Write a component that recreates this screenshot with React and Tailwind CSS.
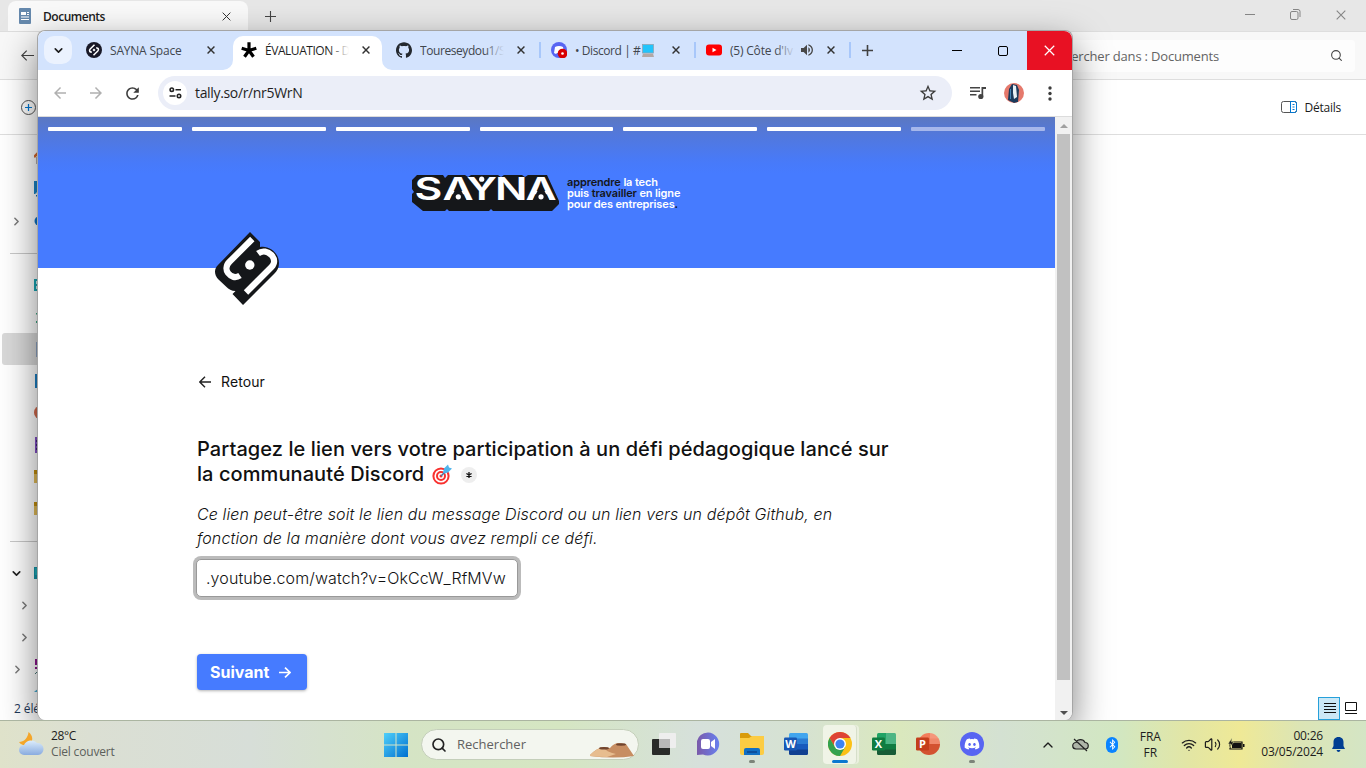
import React from "react";
import { SiGithub } from "react-icons/si";
import { FaDiscord, FaBluetoothB } from "react-icons/fa";
import { MdOutlineStarBorder, MdRefresh, MdVolumeUp, MdOutlineArrowBack, MdOutlineArrowForward } from "react-icons/md";
import { Wifi, Volume2, Search, ChevronRight, ChevronDown, ChevronUp } from "lucide-react";

const Cross = ({ size = 9, width = 1.6, className = "" }) => (
  <svg width={size} height={size} viewBox="0 0 10 10" className={className} fill="none" stroke="currentColor" strokeWidth={width}>
    <path d="M.7.7 9.3 9.3M9.3.7.7 9.3" />
  </svg>
);

const Plus = ({ size = 11, width = 1.6 }) => (
  <svg width={size} height={size} viewBox="0 0 11 11" fill="none" stroke="currentColor" strokeWidth={width}>
    <path d="M5.5 0v11M0 5.5h11" />
  </svg>
);

const SaynaMark = ({ className }) => (
  <svg viewBox="0 0 64 73" className={className}>
    <path fill="#15171a" d="M35 0 45 10v5c8-2 19 5 19 16 0 5-2 8-5 11L28 73 17.500 62l3-3c-4 0-7-2-9-4L3 47c-4-5-4-10 0-14Z" />
    <path d="M37.300 7 14.500 29.800c-4 4-3.500 8.500-1.500 11.200 3 4 7.500 5.500 12 2.500" fill="none" stroke="#fff" strokeWidth="6.200" />
    <path d="M43 21.500c4.500-3.500 10-2 13.500 1.500 3.500 4 3.500 8.500 0 12L31 60.500" fill="none" stroke="#fff" strokeWidth="6.200" />
    <circle cx="34.800" cy="33" r="4.700" fill="#fff" />
  </svg>
);

const SaynaLogo = () => (
  <svg width="149" height="37" viewBox="0 0 149 37" className="shrink-0">
    <path fill="#15171a" d="M5 1h26l2 3 3-3h17l3 2 3-2h27l3 2 3-2h18l3 2 3-2h19l12 26v3l-7 7H81l-2-2-2 2H37l-2-2-2 2H11L0 28V20l2-2-2-3V6Z" />
    <text transform="scale(1.38 1)" x="1.800 22.100 39.500 60.100 82.200" y="26" fontSize="31" fontWeight="600" fill="#fff" className="font-['Inter',sans-serif]">SAYNA</text>
    <path fill="#15171a" d="m46 10 8.500 17h-17zm83 0 8.500 17h-17z" />
    <g fill="#fff">
      <circle cx="46.300" cy="22.800" r="2.600" /><circle cx="69.700" cy="5.200" r="2.600" /><circle cx="129" cy="22.800" r="2.600" />
    </g>
  </svg>
);

const Asterisk = ({ size = 16 }) => (
  <svg width={size} height={size} viewBox="0 0 16 16" stroke="#000" strokeWidth="3.2" fill="none">
    <path d="M8 8.500V.3M8 8.500.7 6.200M8 8.500l7.300-2.300M8 8.500l-4.500 6.200M8 8.500l4.500 6.200" />
  </svg>
);

const YouTube = () => (
  <svg width="16" height="16" viewBox="0 0 16 16">
    <rect y="2.500" width="16" height="11" rx="3" fill="#f00" /><path d="m6.500 5.700 4 2.300-4 2.300z" fill="#fff" />
  </svg>
);

const DiscordTabIcon = () => (
  <svg width="16" height="16" viewBox="0 0 16 16">
    <circle cx="8" cy="8" r="8" fill="#5865f2" />
    <path d="M4 5c2.500-1.500 5.500-1.500 8 0l1 6-2 1-1-1H6l-1 1-2-1z" fill="#fff" />
    <circle cx="11.500" cy="11.500" r="4.800" fill="#d80000" /><circle cx="11.500" cy="11.500" r="1.300" fill="#fff" />
  </svg>
);

const SpaceIcon = () => (
  <svg width="16" height="16" viewBox="0 0 16 16">
    <circle cx="8" cy="8" r="8" fill="#191927" />
    <path d="M8.500 2.700 4.200 7c-1.500 1.500-.3 3.500 1.700 3M7.500 13.300 11.800 9c1.500-1.500.3-3.500-1.700-3" fill="none" stroke="#fff" strokeWidth="1.500" />
    <path d="m8 6.500 1.500 1.500L8 9.500 6.500 8z" fill="#fff" />
  </svg>
);

const Laptop = () => (
  <svg width="12" height="13" viewBox="0 0 12 13" className="ml-[2px] inline-block align-[-2px]">
    <rect x=".5" y=".5" width="11" height="8.500" fill="#22c4fb" stroke="#8fa5b5" strokeWidth=".8" />
    <path d="M1 9.500h10l1 3.500H0z" fill="#b3a8a5" />
  </svg>
);

function Tab({ icon, title, active, muted, separator, fade, tracking }) {
  return (
    <div className="flex h-[34px] w-[155px] shrink-0 items-start">
      <div className={active ? "relative flex h-[34px] w-[149px] items-center rounded-t-[10px] bg-white pb-[6px] pl-2" : "flex h-[28px] w-[149px] items-center pl-2"}>
        {active && (
          <>
            <svg className="absolute bottom-0 left-[-10px]" width="10" height="10"><path d="M10 0v10H0A10 10 0 0 0 10 0" fill="#fff" /></svg>
            <svg className="absolute right-[-10px] bottom-0" width="10" height="10"><path d="M0 0v10h10A10 10 0 0 1 0 0" fill="#fff" /></svg>
          </>
        )}
        <div className="flex w-4 shrink-0 justify-center">{icon}</div>
        <div className={"relative mt-px ml-2 overflow-hidden text-[12px] whitespace-nowrap " + tracking + (muted ? " w-[65px] " : " w-[84px] ") + (active ? "text-[#1f1f1f]" : "text-[#41464d]")}>
          {title}
          {fade && <div className={"absolute top-0 right-0 h-full w-5 bg-linear-to-r from-transparent " + (active ? "to-white" : "to-[#d3e3fd]")} />}
        </div>
        {muted && <MdVolumeUp className="ml-[4px] shrink-0 text-[#474747]" size={16} />}
        <Cross size={8} className={"shrink-0 text-[#333] " + (muted ? "ml-[12px]" : "ml-[13px]")} width={1.8} />
      </div>
      <div className={"mt-[6px] ml-[2px] h-4 w-[2px] " + (separator ? "bg-[#a8c7fa]" : "")} />
    </div>
  );
}

function TabStrip() {
  return (
    <div className="flex h-[39px] shrink-0 items-start overflow-hidden rounded-t-lg bg-[#d3e3fd]">
      <div className="mt-[5px] ml-[6px] flex h-7 w-7 shrink-0 items-center justify-center rounded-[10px] bg-[#ebf2fe]">
        <ChevronDown size={13} strokeWidth={3} className="text-[#1f1f1f]" />
      </div>
      <div className="mt-[5px] ml-[6px] flex">
        <Tab icon={<SpaceIcon />} title="SAYNA Space" tracking="tracking-[-0.2px]" />
        <Tab icon={<Asterisk />} title="ÉVALUATION - D" tracking="tracking-[-0.45px]" active fade />
        <Tab icon={<SiGithub size={16} color="#24292f" />} title="Toureseydou1/S" tracking="tracking-[-0.42px]" separator fade />
        <Tab icon={<DiscordTabIcon />} title={<>• Discord | #<Laptop /></>} tracking="tracking-[-0.42px]" separator />
        <Tab icon={<YouTube />} title="(5) Côte d'Iv" tracking="tracking-[-0.2px]" separator muted fade />
      </div>
      <div className="mt-[14px] ml-[9px] text-[#414141]"><Plus size={11} /></div>
      <div className="ml-auto flex h-full items-center">
        <div className="mr-[36px] h-px w-[10px] bg-black" />
        <div className="mr-[19px] h-[10px] w-[10px] rounded-[2px] border border-black" />
        <div className="flex h-full w-[45px] items-center justify-center bg-[#e81123] pr-px text-white"><Cross size={11} width={1.1} /></div>
      </div>
    </div>
  );
}

function Toolbar() {
  return (
    <div className="flex h-[47px] shrink-0 items-center border-b border-[#dcdcdc] bg-white pl-[13px]">
      <MdOutlineArrowBack size={18} className="text-[#b0b0b0]" />
      <MdOutlineArrowForward size={18} className="ml-[18px] text-[#b0b0b0]" />
      <MdRefresh size={19} className="ml-[18px] text-[#3c3c3c]" />
      <div className="ml-[16px] flex h-[34px] w-[794px] items-center rounded-full bg-[#ebeef8] pl-[5px]">
        <div className="flex h-6 w-6 items-center justify-center rounded-full bg-white">
          <svg width="13" height="12" viewBox="0 0 13 12" fill="none" stroke="#222" strokeWidth="1.600">
            <circle cx="2.800" cy="2.700" r="1.700" /><path d="M6.500 2.700H12M.5 9h6" /><circle cx="10" cy="9" r="1.700" />
          </svg>
        </div>
        <div className="-mt-px ml-2 text-[14px] tracking-[-0.34px] text-[#1f1f1f]">tally.so/r/nr5WrN</div>
        <MdOutlineStarBorder size={20} className="mr-[14px] ml-auto text-[#3c3c3c]" />
      </div>
      <svg width="16" height="14" viewBox="0 0 16 14" className="ml-[18px]" fill="#444">
        <path d="M0 1h10v1.600H0zM0 4.500h10v1.600H0zM0 8h6.500v1.600H0zM11.500 1H16v2h-2.800v7.500h-1.700z" /><circle cx="10.800" cy="10.500" r="2.600" />
      </svg>
      <svg width="20" height="20" viewBox="0 0 20 20" className="ml-[18px]">
        <clipPath id="av"><circle cx="10" cy="10" r="10" /></clipPath>
        <g clipPath="url(#av)">
          <path fill="#e5796c" d="M0 0h20v20H0z" /><path fill="#1b3a5c" d="m8 1 5 1 2 5-1 12-4 1-6-3 1-11z" /><path fill="#e9f0f5" d="m9 2 3 1 1 11-3 2-1-6z" /><path fill="#4385b7" d="M6 6h1v10H6z" />
        </g>
      </svg>
      <svg width="4" height="15" viewBox="0 0 4 15" className="ml-[24px]" fill="#3c3c3c"><circle cx="2" cy="2" r="1.700" /><circle cx="2" cy="7.500" r="1.700" /><circle cx="2" cy="13" r="1.700" /></svg>
    </div>
  );
}

const Target = () => (
  <svg width="20" height="21" viewBox="0 0 20 20" className="mb-px ml-2">
    <circle cx="9" cy="11.500" r="7.600" fill="#fff" stroke="#f8312f" strokeWidth="2" /><circle cx="9" cy="11.500" r="4" fill="#fff" stroke="#f8312f" strokeWidth="2" /><circle cx="9" cy="11.500" r="1.500" fill="#f8312f" />
    <path d="m9 11.500 6-6" stroke="#3a7aa5" strokeWidth="1.200" /><path d="m11 8 1-4 4-4 1 3 3 1-4 4-4 1z" fill="#50b5ec" />
  </svg>
);

function FormPage() {
  return (
    <div className="relative flex-1 bg-white font-['Inter',sans-serif] text-[#111]">
      <div className="flex h-[151px] flex-col bg-[linear-gradient(180deg,#5b78c1_0px,#5278dc_18px,#477afa_46px,#467bff_56px)]">
        <div className="flex gap-[10px] px-[10px] pt-[10px]">
          {[0, 1, 2, 3, 4, 5, 6].map((i) => (
            <div key={i} className={"h-1 flex-1 rounded-[1px] " + (i === 6 ? "bg-[#a6b7eb]" : "bg-white")} />
          ))}
        </div>
        <div className="mt-[43px] ml-[374px] flex">
          <SaynaLogo />
          <div className="mt-[3px] ml-[6px] text-[11px] leading-[11px] font-semibold tracking-[-0.13px] whitespace-nowrap text-white">
            <div><span className="text-[#15171a]">apprendre</span> la tech</div>
            <div>puis <span className="text-[#15171a]">travailler</span> en ligne</div>
            <div>pour des entreprises<span className="text-[#15171a]">.</span></div>
          </div>
        </div>
      </div>
      <SaynaMark className="absolute top-[115px] left-[177px] h-[73px] w-[64px]" />
      <div className="flex flex-col items-start pl-[159px]">
        <div className="mt-[103px] flex h-5 items-center text-[14px]">
          <svg width="12" height="12" viewBox="0 0 12 12" fill="none" stroke="#222" strokeWidth="1.400" className="mt-px ml-[2px]"><path d="M12 6H1M6 .8.800 6 6 11.200" /></svg>
          <span className="ml-[10px] tracking-[0.1px]">Retour</span>
        </div>
        <h1 className="mt-[46px] text-[20px] leading-[25px] font-medium tracking-[0.08px] whitespace-nowrap">
          <span className="block">Partagez le lien vers votre participation à un défi pédagogique lancé sur</span>
          <span className="flex h-[25px] items-center">
            la communauté Discord
            <Target />
            <span className="mt-px ml-[9px] flex h-4 w-4 items-center justify-center rounded-full bg-[#eee]">
              <svg width="6" height="6" viewBox="0 0 6 6" stroke="#111" strokeWidth="1.300"><path d="M3 0v6M.4 1.500l5.200 3M5.600 1.500l-5.200 3" /></svg>
            </span>
          </span>
        </h1>
        <p className="mt-[15px] text-[16px] leading-6 font-light tracking-[0.12px] whitespace-nowrap italic">
          Ce lien peut-être soit le lien du message Discord ou un lien vers un dépôt Github, en<br />fonction de la manière dont vous avez rempli ce défi.
        </p>
        <div className="mt-[9px] -ml-px flex h-[38px] w-[322px] items-center overflow-hidden rounded-[5px] border border-[#999] bg-white pl-[9px] text-[16px] font-light tracking-[0.1px] whitespace-nowrap ring-[3px] ring-[#bbb]">.youtube.com/watch?v=OkCcW_RfMVw</div>
        <div className="mt-[57px] flex h-9 w-[110px] items-center rounded-[4px] bg-[#467bff] pl-[13px] text-[16px] font-bold text-white shadow-[0_1px_3px_rgba(0,0,0,.3)]">
          <span>Suivant</span>
          <svg width="12" height="11" viewBox="0 0 12 11" fill="none" stroke="#fff" strokeWidth="1.700" className="ml-[10px]"><path d="M0 5.500h11M6 .7l5 4.800-5 4.800" /></svg>
        </div>
      </div>
    </div>
  );
}

function ChromeWindow() {
  return (
    <div className="absolute top-[30px] left-[37px] flex h-[690px] w-[1036px] flex-col rounded-lg border border-b-0 border-[#a5a5a5] bg-white shadow-[0_14px_36px_rgba(0,0,0,0.5)]">
      <TabStrip />
      <Toolbar />
      <div className="flex min-h-0 flex-1 overflow-hidden rounded-b-lg">
        <FormPage />
        <div className="flex w-[17px] flex-col items-center bg-[#f1f1f1]">
          <svg width="8" height="4" className="mt-[7px]"><path d="m4 0 4 4H0z" fill="#a0a0a0" /></svg>
          <div className="mt-[6px] h-[546px] w-[13px] bg-[#c1c1c1]" />
          <svg width="8" height="4" className="mt-[31px]"><path d="m4 4 4-4H0z" fill="#505050" /></svg>
        </div>
      </div>
    </div>
  );
}

const glyphs = {
  home: <><path d="m0 8 7-7 7 7" stroke="#d8692c" strokeWidth="2.500" fill="none" /><path d="M2 8h11v7H2z" fill="#b5b0ae" /></>,
  gallery: <><rect width="16" height="13" fill="#1985c9" /><path d="m1 13 9-9 6 9z" fill="#d4ecfa" /><path d="M2 14h12v1.500H2z" fill="#1673b5" /></>,
  cloud: <circle cx="5" cy="8" r="4.500" fill="#0c74c8" />,
  desktop: <><rect y="2" width="16" height="12" fill="#18a6b5" /><path d="M2 4h3v3H2zm0 5h3v3H2z" fill="#d6f5fa" /></>,
  download: <path d="M2 4h4v1.500H2zm0 8h12v2H2z" fill="#3aa882" />,
  doc: <rect x="2" y="1" width="13" height="15" fill="#8da4c4" />,
  image: <rect x="1" y="1" width="14" height="14" fill="#1b7fc4" />,
  music: <circle cx="7" cy="7.500" r="7" fill="#d2694c" />,
  video: <><rect x="1" width="14" height="16" fill="#8450c8" /><path d="M2 3h2v2H2zm0 4h2v2H2zm0 4h2v2H2z" fill="#44237b" /></>,
  folder: <><path d="M0 2h16v12H0z" fill="#e3bd59" /><path d="M0 1h7v4H0z" fill="#c48f0e" /></>,
  pc: <><rect y="2" width="16" height="12" fill="#1596aa" /><path d="M1 3h14v7H1z" fill="#20b0bd" /></>,
};

function SideRow({ icon, open, chevron, indent, selected, line }) {
  if (line) return <div className="flex h-8 items-center pl-[10px]"><div className="h-px w-12 bg-[#c9c9c9]" /></div>;
  return (
    <div className={"flex h-8 w-[120px] items-center rounded-[3px] " + (selected ? "ml-[2px] bg-[#d9d9d9] " : "") + (indent ? "pl-[19px]" : selected ? "pl-[9px]" : "pl-[11px]")}>
      <div className="flex w-[11px] justify-center text-[#7b7b7b]">
        {chevron && <ChevronRight size={13} strokeWidth={2.8} className="shrink-0" />}
        {open && <ChevronDown size={13} strokeWidth={3} className="shrink-0 text-[#222]" />}
      </div>
      {icon && <svg width="16" height="16" viewBox="0 0 16 16" className="ml-[12px]">{glyphs[icon]}</svg>}
    </div>
  );
}

function Explorer() {
  return (
    <div className="flex h-[720px] flex-col bg-white">
      <div className="flex h-[31px] items-start bg-[#e7e7e7]">
        <div className="mt-px ml-2 flex h-[30px] w-[240px] items-center rounded-t-lg bg-[#f9f9f9] pl-[11px]">
          <svg width="12" height="16" viewBox="0 0 12 16"><rect width="12" height="16" rx="1" fill="#6689ad" /><path d="M2 4h5v3H2zm6 0h2v1H8zm0 2h2v1H8zM2 8.500h8v1H2zm0 2.500h8v1H2z" fill="#fff" /></svg>
          <span className="mt-px ml-3 text-[12px] font-semibold tracking-[-0.48px] text-[#1b1b1b]">Documents</span>
          <Cross size={9} width={1.1} className="mr-[17px] ml-auto text-[#333]" />
        </div>
        <div className="mt-[11px] ml-[17px] text-[#444]"><Plus size={11} width={1.1} /></div>
        <div className="mr-5 ml-auto flex h-[29px] items-center text-[#858585]">
          <div className="mr-[35px] h-px w-[10px] bg-[#858585]" />
          <svg width="11" height="11" viewBox="0 0 11 11" fill="none" stroke="#858585" className="mr-[35px]"><rect x=".5" y="2.500" width="7.500" height="8" rx="1.500" /><path d="M3 .5h5q2 0 2 2V8" /></svg>
          <Cross size={10} width={1.1} />
        </div>
      </div>
      <div className="flex h-[49px] items-center border-t border-b border-[#dedede] bg-[#f8f8f8] pl-[21px]">
        <svg width="13" height="11" viewBox="0 0 13 11" fill="none" stroke="#444" strokeWidth="1.200"><path d="M13 5.500H1M5.700.6.800 5.500l4.900 4.900" /></svg>
        <div className="mr-[11px] ml-auto flex h-8 w-[320px] items-center rounded-[4px] bg-[#fdfdfd] pl-[9px] text-[13px] text-[#646464]">
          <span className="mt-[3px] flex w-[175px] shrink-0 justify-end tracking-[-0.18px] whitespace-nowrap">Rechercher dans : Documents</span>
          <Search size={13} className="mr-[12px] ml-auto text-[#444]" />
        </div>
      </div>
      <div className="flex h-[55px] items-center border-b border-[#dedede] pl-[21px]">
        <svg width="15" height="15" viewBox="0 0 15 15" fill="none"><circle cx="7.500" cy="7.500" r="7" stroke="#555" /><path d="M7.500 4v7M4 7.500h7" stroke="#0078d4" strokeWidth="1.200" /></svg>
        <svg width="16" height="12" viewBox="0 0 16 12" fill="none" className="ml-auto"><rect x=".5" y=".5" width="15" height="11" rx="2" stroke="#555" /><path d="M9.500.5h4q2 0 2 2v7q0 2-2 2h-4zM11.500 3.500h2m-2 2.500h2m-2 2.500h2" stroke="#0078d4" /></svg>
        <span className="mt-px mr-[25px] ml-2 text-[12px] tracking-[-0.25px] text-[#1b1b1b]">Détails</span>
      </div>
      <div className="min-h-0 flex-1 overflow-hidden pt-[6px]">
        <SideRow icon="home" />
        <SideRow icon="gallery" />
        <SideRow icon="cloud" chevron />
        <SideRow line />
        <SideRow icon="desktop" />
        <SideRow icon="download" />
        <SideRow icon="doc" selected />
        <SideRow icon="image" />
        <SideRow icon="music" />
        <SideRow icon="video" />
        <SideRow icon="folder" />
        <SideRow icon="folder" />
        <SideRow line />
        <SideRow icon="pc" open />
        <SideRow chevron indent />
        <SideRow chevron indent />
        <div className="flex h-6 items-center pl-[11px]">
          <ChevronRight size={13} strokeWidth={2.8} className="mt-2 text-[#7b7b7b]" />
          <svg width="14" height="16" viewBox="0 0 14 16" className="mt-1 ml-[10px]"><path d="M6 1H2v4h4v4H1" stroke="#8d168d" strokeWidth="2" fill="none" /><path d="m1 15 4-4" stroke="#477" /></svg>
        </div>
        <svg width="20" height="4" className="mt-[11px] ml-[34px]"><path d="M0 4q4-4 9-4h5v4z" fill="#45add3" /></svg>
      </div>
      <div className="flex h-[23px] items-center pl-[14px] text-[12px] text-[#1e395b]">
        <span className="tracking-[-0.1px]">2 éléments</span>
        <div className="mr-[8px] ml-auto flex items-center">
          <div className="flex h-[23px] w-[22px] items-center justify-center border border-[#26a0da] bg-[#cbe8f6]">
            <svg width="12" height="11" className="ml-[2px]"><path d="M0 .5h12M0 3.500h12M0 6.500h12M0 9.500h12" stroke="#111" /></svg>
          </div>
          <svg width="14" height="13" className="ml-[4px]" fill="none" stroke="#111"><path d="M1.500.5h11v8h-11zM1 11.500h12" /></svg>
        </div>
      </div>
    </div>
  );
}

const OfficeIcon = ({ letter, tones, tile, round }) => (
  <svg width="24" height="24" viewBox="0 0 24 24">
    <clipPath id={"clip-" + letter}>{round ? <circle cx="13" cy="12" r="11" /> : <rect x="5" y="1" width="19" height="22" rx="1.500" />}</clipPath>
    <g clipPath={"url(#clip-" + letter + ")"}>
      {tones.map((c, i) => <rect key={i} x="1" y={1 + i * 5.500} width="23" height="6" fill={c} />)}
      {letter !== "W" && <rect x="14" y="1" width="10" height="11" fill="#fff" opacity=".2" />}
    </g>
    <rect x="0" y="5.500" width="13" height="13" rx="1.200" fill={tile} />
    <text x="6.500" y="16" fill="#fff" fontSize="11" fontWeight="700" textAnchor="middle" className="font-['Open_Sans',sans-serif]">{letter}</text>
  </svg>
);

const Slot = ({ children, mark, active }) => (
  <div className="flex h-full w-[44px] shrink-0 justify-center">
    <div className={"mt-1 flex h-[39px] w-[34px] flex-col items-center " + (active ? "rounded-[4px] border-r border-[#d6dfca] bg-[#f0f4e7] shadow-[2px_0_0_#eaf0de]" : "")}>
      <div className="mt-[7px] flex h-6 items-center">{children}</div>
      {mark && <div className={"h-[3px] rounded-full " + (active ? "mt-[4px] w-4 bg-[#0b78d0]" : "mt-[4px] w-[6px] bg-[#7c8479]")} />}
    </div>
  </div>
);

function Taskbar() {
  return (
    <div className="flex h-12 items-center border-t border-[#abb5a1] bg-[linear-gradient(90deg,#dfe2ca_0px,#dbdfd3_90px,#d7ded8_250px,#d5e4c5_400px,#d5e6c2_560px,#d6e0db_700px,#d6e2d2_800px,#dae8bd_900px,#d4e1d2_1000px,#d2e7c1_1120px,#e3e6a4_1190px,#efe996_1240px,#dce5b5_1300px,#d4e5c5_1366px)] text-[12px] text-[#1d1d1d]">
      <div className="flex w-[384px] items-center pb-px pl-[18px]">
        <svg width="26" height="25" viewBox="0 0 26 25">
          <path d="M10.500 0c5 4 5 10 0 13L5 13Q2 12 1 10c5 0 9-4 9.500-10" fill="#f4a62a" />
          <defs><linearGradient id="wc" x2="0" y2="1"><stop stopColor="#dcecfb" /><stop offset="1" stopColor="#89abdf" /></linearGradient></defs>
          <path d="M6 23a5 5 0 0 1 0-10 8 8 0 0 1 13-2 6 6 0 1 1 1 12z" fill="url(#wc)" />
        </svg>
        <div className="-mt-px ml-[7px] leading-4">
          <div className="tracking-[-0.4px]">28°C</div>
          <div className="tracking-[-0.17px] text-[#5c605b]">Ciel couvert</div>
        </div>
      </div>
      <svg width="24" height="24" viewBox="0 0 24 24"><defs><linearGradient id="wl" x2="1" y2="1"><stop stopColor="#4fd0fa" /><stop offset="1" stopColor="#006fd0" /></linearGradient></defs><path d="M0 0h11.500v11.500H0zM12.500 0H24v11.500H12.500zM0 12.500h11.500V24H0zM12.500 12.500H24V24H12.500z" fill="url(#wl)" /></svg>
      <div className="ml-[13px] flex h-[31px] w-[218px] items-center rounded-full border border-[#c4cfba] bg-[#f3f6ef] pl-[9px]">
        <Search size={16} strokeWidth={2.5} className="text-[#222]" />
        <span className="ml-[10px] text-[13px] text-[#616161]">Rechercher</span>
        <svg width="44" height="16" viewBox="0 0 44 16" className="mt-[10px] mr-[4px] ml-auto">
          <path d="M0 13q7-7 13-8l7 1q4-5 9-5l7 1 8 12q-20 3-44 0z" fill="#c78e62" /><path d="M0 13q7-7 13-8 3 5 13 7l-9 3q-10 0-17-1z" fill="#e7bd8f" /><ellipse cx="14" cy="6.300" rx="5" ry="1.200" fill="#70442e" /><ellipse cx="31" cy="2.500" rx="5" ry="1.200" fill="#70442e" />
        </svg>
      </div>
      <div className="ml-[3px] flex h-full">
        <Slot><svg width="24" height="22" viewBox="0 0 24 22"><rect y="6" width="18" height="16" rx="1" fill="#292b29" /><rect x="7" width="17" height="15" rx="1" fill="#eee" /><path d="M7 6h11v9H7z" fill="#b8b8b8" /></svg></Slot>
        <Slot><svg width="24" height="24" viewBox="0 0 24 24"><defs><linearGradient id="ch" x2="1"><stop stopColor="#7a5aaa" /><stop offset="1" stopColor="#6880ef" /></linearGradient></defs><path d="M12 .5a11.500 11.500 0 1 1-5 22L1 23V9Q3 1 12 .5" fill="url(#ch)" /><rect x="5" y="7" width="9" height="10" rx="2" fill="#fff" /><path d="m15 10 4-3v10l-4-3z" fill="#fff" /></svg></Slot>
        <Slot mark><svg width="24" height="22" viewBox="0 0 24 22"><path d="M0 1q0-1 1-1h7l3 3h12l1 3H0z" fill="#d99b0b" /><path d="M0 5h9l3-2h12v17q0 2-2 2H2q-2 0-2-2z" fill="#fccc43" /><path d="M4 22v-5q0-2 2-2h12q2 0 2 2v5z" fill="#116fc4" /><path d="M7 18h10v2H7z" fill="#0c4f9d" /></svg></Slot>
        <Slot><OfficeIcon letter="W" tones={["#41a5ee", "#2b7cd3", "#185abd", "#103f91"]} tile="#1857b4" /></Slot>
        <Slot mark active><svg width="24" height="24" viewBox="0 0 24 24">
          <circle cx="12" cy="12" r="12" fill="#fbc116" />
          <path d="M12 6h10.400A12 12 0 0 0 1.600 6L7 15z" fill="#de4335" />
          <path d="M1.600 6A12 12 0 0 0 12 24l5.200-9L7 15z" fill="#34a24f" /><circle cx="12" cy="12" r="6" fill="#fff" /><circle cx="12" cy="12" r="4.600" fill="#3c83f1" />
        </svg></Slot>
        <Slot><OfficeIcon letter="X" tones={["#21a366", "#21a366", "#107c41", "#185c37"]} tile="#107c41" /></Slot>
        <Slot><OfficeIcon letter="P" tones={["#f37d5b", "#ed6c47", "#d35230", "#d35230"]} tile="#c43e1c" round /></Slot>
        <Slot mark><div className="flex h-6 w-6 items-center justify-center rounded-full bg-[#5865f2]"><FaDiscord size={16} color="#fff" /></div></Slot>
      </div>
      <div className="mr-[21px] ml-auto flex items-center">
        <ChevronUp size={16} className="mr-[16px]" />
        <svg width="17" height="14" viewBox="0 0 17 14" fill="#aeb5a8" stroke="#222" strokeWidth="1.200" className="mr-[17px]"><path d="M4 11a3.200 3.200 0 0 1 0-6.500 5 5 0 0 1 9 0 3.200 3.200 0 0 1 0 6.500zM2 1l13 12" /></svg>
        <div className="mr-[21px] flex h-4 w-3 items-center justify-center rounded-[6px] bg-[#0a84ff]"><FaBluetoothB size={11} color="#fff" /></div>
        <div className="mr-[20px] w-[22px] text-center leading-4 tracking-[-0.1px]">FRA<br />FR</div>
        <Wifi size={16} strokeWidth={2} className="mr-[7px]" />
        <Volume2 size={17} strokeWidth={1.7} className="mr-[7px]" />
        <svg width="17" height="13" viewBox="0 -1 17 13" className="mr-[16px]"><path d="M2 3h12v7H2z" fill="none" stroke="#111" strokeWidth="1.200" /><path d="M4 4h9.500v5H4zM15 5h1.500v3H15z" fill="#111" /><path d="M4-1 0 5h3L1 9l5-6H3.500z" fill="#111" stroke="#e6e8a0" strokeWidth=".5" /></svg>
        <div className="mt-[-2px] mr-[9px] text-right leading-4 tracking-[-0.2px]">00:26<br />03/05/2024</div>
        <svg width="13" height="15" viewBox="0 0 13 15" fill="#003e92"><path d="M6.500 0C10 0 11.500 2.500 11.500 5v4l1.500 3H0l1.500-3V5c0-2.500 1.500-5 5-5M4.500 13h4q-.5 2-2 2t-2-2" /></svg>
      </div>
    </div>
  );
}

export default function App() {
  return (
    <div className="flex h-[768px] w-[1366px] flex-col overflow-hidden font-['Open_Sans','Noto_Sans',sans-serif]">
      <div className="relative h-[720px] overflow-hidden">
        <Explorer />
        <ChromeWindow />
      </div>
      <Taskbar />
    </div>
  );
}
